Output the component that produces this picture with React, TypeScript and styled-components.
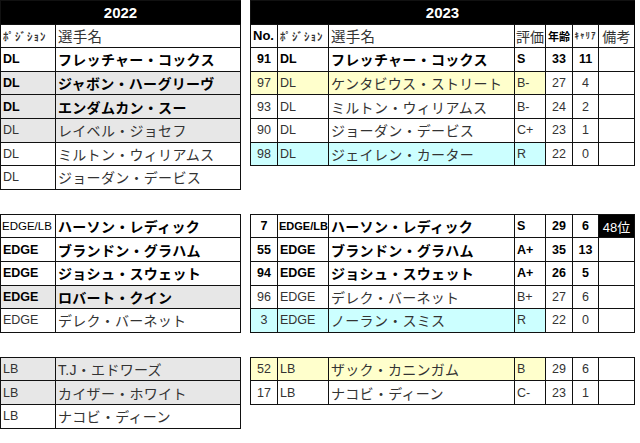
import React from "react";
import styled, { createGlobalStyle } from "styled-components";

type Bg = "white" | "gray" | "yellow" | "cyan";

interface LeftRow {
  pos: string;
  name: string;
  bold?: boolean;
  bg?: Bg;
  posSmall?: boolean;
}

interface RightRow {
  no: string;
  pos: string;
  name: string;
  grade: string;
  age: string;
  career: string;
  bold?: boolean;
  bg?: Bg;
  note?: string;
}

const bgColor = (bg?: Bg) => {
  switch (bg) {
    case "gray":
      return "#e7e7e7";
    case "yellow":
      return "#ffffcc";
    case "cyan":
      return "#ccffff";
    default:
      return "#ffffff";
  }
};

const leftSections: LeftRow[][] = [
  [
    { pos: "DL", name: "フレッチャー・コックス", bold: true },
    { pos: "DL", name: "ジャボン・ハーグリーヴ", bold: true, bg: "gray" },
    { pos: "DL", name: "エンダムカン・スー", bold: true, bg: "gray" },
    { pos: "DL", name: "レイベル・ジョセフ", bg: "gray" },
    { pos: "DL", name: "ミルトン・ウィリアムス" },
    { pos: "DL", name: "ジョーダン・デービス" },
  ],
  [
    { pos: "EDGE/LB", name: "ハーソン・レディック", bold: true, posSmall: true },
    { pos: "EDGE", name: "ブランドン・グラハム", bold: true },
    { pos: "EDGE", name: "ジョシュ・スウェット", bold: true },
    { pos: "EDGE", name: "ロバート・クイン", bold: true, bg: "gray" },
    { pos: "EDGE", name: "デレク・バーネット" },
  ],
  [
    { pos: "LB", name: "T.J・エドワーズ", bg: "gray" },
    { pos: "LB", name: "カイザー・ホワイト", bg: "gray" },
    { pos: "LB", name: "ナコビ・ディーン" },
  ],
];

const rightSections: RightRow[][] = [
  [
    { no: "91", pos: "DL", name: "フレッチャー・コックス", grade: "S", age: "33", career: "11", bold: true },
    { no: "97", pos: "DL", name: "ケンタビウス・ストリート", grade: "B-", age: "27", career: "4", bg: "yellow" },
    { no: "93", pos: "DL", name: "ミルトン・ウィリアムス", grade: "B-", age: "24", career: "2" },
    { no: "90", pos: "DL", name: "ジョーダン・デービス", grade: "C+", age: "23", career: "1" },
    { no: "98", pos: "DL", name: "ジェイレン・カーター", grade: "R", age: "22", career: "0", bg: "cyan" },
  ],
  [
    { no: "7", pos: "EDGE/LB", name: "ハーソン・レディック", grade: "S", age: "29", career: "6", bold: true, note: "48位" },
    { no: "55", pos: "EDGE", name: "ブランドン・グラハム", grade: "A+", age: "35", career: "13", bold: true },
    { no: "94", pos: "EDGE", name: "ジョシュ・スウェット", grade: "A+", age: "26", career: "5", bold: true },
    { no: "96", pos: "EDGE", name: "デレク・バーネット", grade: "B+", age: "27", career: "6" },
    { no: "3", pos: "EDGE", name: "ノーラン・スミス", grade: "R", age: "22", career: "0", bg: "cyan" },
  ],
  [
    { no: "52", pos: "LB", name: "ザック・カニンガム", grade: "B", age: "29", career: "6", bg: "yellow" },
    { no: "17", pos: "LB", name: "ナコビ・ディーン", grade: "C-", age: "23", career: "1" },
  ],
];

const App: React.FC = () => {
  return (
    <>
      <GlobalStyle />
      <Page>
        {leftSections.map((left, i) => (
          <Section key={i}>
            <LeftTable>
              {i === 0 && (
                <>
                  <YearBar>2022</YearBar>
                  <Cell $size={11} $tiny>ﾎﾟｼﾞｼｮﾝ</Cell>
                  <Cell $size={14.5} $jp>選手名</Cell>
                </>
              )}
              {left.map((r, j) => (
                <React.Fragment key={j}>
                  <Cell
                    $bg={r.bg}
                    $bold={r.bold && !r.posSmall}
                    $dark={r.posSmall}
                    $size={r.posSmall ? 11.5 : undefined}
                    $tight={r.posSmall}
                  >
                    {r.pos}
                  </Cell>
                  <Cell $bg={r.bg} $bold={r.bold} $jp>
                    {r.name}
                  </Cell>
                </React.Fragment>
              ))}
            </LeftTable>
            <RightTable>
              {i === 0 && (
                <>
                  <YearBar>2023</YearBar>
                  <Cell $bold $size={13}>No.</Cell>
                  <Cell $size={11} $tiny>ﾎﾟｼﾞｼｮﾝ</Cell>
                  <Cell $size={14.5} $jp>選手名</Cell>
                  <Cell $size={14} $jp $tight>評価</Cell>
                  <Cell $size={11} $bold $align="center">年齢</Cell>
                  <Cell $size={9} $tiny $align="center">ｷｬﾘｱ</Cell>
                  <Cell $size={14} $jp $align="center">備考</Cell>
                </>
              )}
              {rightSections[i].map((r, j) => (
                <React.Fragment key={j}>
                  <Cell $bg={r.bg} $bold={r.bold} $align="center">{r.no}</Cell>
                  <Cell
                    $bg={r.bg}
                    $bold={r.bold}
                    $size={r.pos.length > 4 ? 11 : 12.5}
                    $tight={r.pos.length > 4}
                  >
                    {r.pos}
                  </Cell>
                  <Cell $bg={r.bg} $bold={r.bold} $jp>{r.name}</Cell>
                  <Cell $bg={r.bg} $bold={r.bold}>{r.grade}</Cell>
                  <Cell $bold={r.bold} $align="center">{r.age}</Cell>
                  <Cell $bold={r.bold} $align="center">{r.career}</Cell>
                  {r.note ? <NoteCell>{r.note}</NoteCell> : <Cell />}
                </React.Fragment>
              ))}
            </RightTable>
          </Section>
        ))}
      </Page>
    </>
  );
};

export default App;

const GlobalStyle = createGlobalStyle`
  html, body {
    margin: 0;
    padding: 0;
    background: #ffffff;
  }
  body {
    font-family: "Liberation Sans", "Noto Sans CJK JP", sans-serif;
  }
`;

const Page = styled.div`
  width: 640px;
  height: 443px;
  display: flex;
  flex-direction: column;
  gap: 24px;
  overflow: hidden;
`;

const Section = styled.div`
  display: flex;
  align-items: flex-start;
  gap: 9px;
`;

const Table = styled.div`
  display: grid;
  grid-auto-rows: 23.6px;
  border-top: 1px solid #111;
  border-left: 1px solid #111;
  box-sizing: border-box;
`;

const LeftTable = styled(Table)`
  width: 241px;
  grid-template-columns: 55px 1fr;
`;

const RightTable = styled(Table)`
  width: 385px;
  grid-template-columns: 27px 51px 186px 31px 27px 26px 1fr;
`;

const YearBar = styled.div`
  grid-column: 1 / -1;
  background: #000000;
  color: #ffffff;
  font-weight: bold;
  font-size: 15px;
  display: flex;
  align-items: center;
  justify-content: center;
  border-right: 1px solid #000;
  border-bottom: 1px solid #111;
`;

interface CellProps {
  $bg?: Bg;
  $bold?: boolean;
  $dark?: boolean;
  $align?: "left" | "center";
  $size?: number;
  $jp?: boolean;
  $tiny?: boolean;
  $tight?: boolean;
}

const Cell = styled.div<CellProps>`
  box-sizing: border-box;
  display: flex;
  align-items: center;
  justify-content: ${(p) => (p.$align === "center" ? "center" : "flex-start")};
  padding: ${(p) => (p.$tight ? "0 1px" : "0 2px")};
  background: ${(p) => bgColor(p.$bg)};
  border-right: 1px solid #111;
  border-bottom: 1px solid #111;
  font-size: ${(p) => (p.$size ? p.$size : p.$jp ? 14 : 12.5)}px;
  font-weight: ${(p) => (p.$bold || p.$tiny ? "bold" : "normal")};
  color: ${(p) => (p.$bold || p.$dark ? "#000000" : "#333333")};
  letter-spacing: ${(p) => (p.$jp && !p.$tight ? "0.3px" : p.$tiny ? "1px" : "0")};
  white-space: nowrap;
  overflow: hidden;
`;

const NoteCell = styled(Cell)`
  background: #000000;
  color: #ffffff;
  font-size: 13px;
  justify-content: center;
`;
